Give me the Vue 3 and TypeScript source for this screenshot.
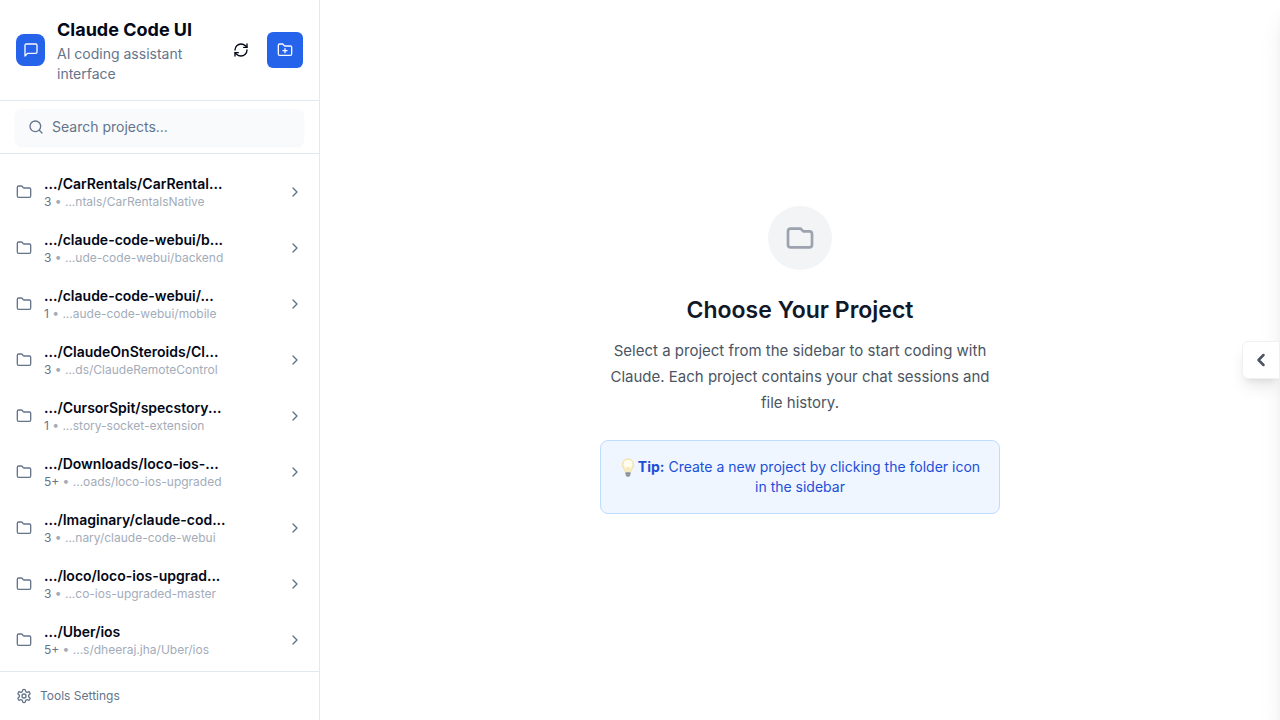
<script setup lang="ts">
import { ref, computed } from 'vue'

interface Project {
  name: string
  sessions: string
  path: string
}

const projects: Project[] = [
  { name: '.../CarRentals/CarRental...', sessions: '3', path: '...ntals/CarRentalsNative' },
  { name: '.../claude-code-webui/b...', sessions: '3', path: '...ude-code-webui/backend' },
  { name: '.../claude-code-webui/...', sessions: '1', path: '...aude-code-webui/mobile' },
  { name: '.../ClaudeOnSteroids/Cl...', sessions: '3', path: '...ds/ClaudeRemoteControl' },
  { name: '.../CursorSpit/specstory...', sessions: '1', path: '...story-socket-extension' },
  { name: '.../Downloads/loco-ios-...', sessions: '5+', path: '...oads/loco-ios-upgraded' },
  { name: '.../Imaginary/claude-cod...', sessions: '3', path: '...nary/claude-code-webui' },
  { name: '.../loco/loco-ios-upgrad...', sessions: '3', path: '...co-ios-upgraded-master' },
  { name: '.../Uber/ios', sessions: '5+', path: '...s/dheeraj.jha/Uber/ios' },
]

const query = ref('')
const visible = computed(() =>
  projects.filter((p) => (p.name + p.path).toLowerCase().includes(query.value.toLowerCase())),
)
</script>

<template>
  <div class="page">
    <aside class="sidebar">
      <header class="head">
        <div class="brand">
          <div class="logo">
            <svg class="icon" viewBox="0 0 24 24"><path d="M21 15a2 2 0 0 1-2 2H7l-4 4V5a2 2 0 0 1 2-2h14a2 2 0 0 1 2 2z" /></svg>
          </div>
          <div class="brand-text">
            <h1>Claude Code UI</h1>
            <p>AI coding assistant interface</p>
          </div>
        </div>
        <div class="actions">
          <button class="square" type="button" aria-label="Refresh projects">
            <svg class="icon" viewBox="0 0 24 24">
              <path d="M3 12a9 9 0 0 1 9-9 9.75 9.75 0 0 1 6.74 2.74L21 8" />
              <path d="M21 3v5h-5" />
              <path d="M21 12a9 9 0 0 1-9 9 9.75 9.75 0 0 1-6.74-2.74L3 16" />
              <path d="M8 16H3v5" />
            </svg>
          </button>
          <button class="square primary" type="button" aria-label="Create project">
            <svg class="icon" viewBox="0 0 24 24">
              <path d="M12 10v6M9 13h6" />
              <path d="M20 20a2 2 0 0 0 2-2V8a2 2 0 0 0-2-2h-7.900a2 2 0 0 1-1.690-.9L9.600 3.900A2 2 0 0 0 7.930 3H4a2 2 0 0 0-2 2v13a2 2 0 0 0 2 2Z" />
            </svg>
          </button>
        </div>
      </header>

      <div class="search">
        <label class="search-box">
          <svg class="icon" viewBox="0 0 24 24"><circle cx="11" cy="11" r="8" /><path d="m21 21-4.300-4.300" /></svg>
          <input v-model="query" type="text" placeholder="Search projects..." aria-label="Search projects" />
        </label>
      </div>

      <nav class="list" aria-label="Projects">
        <button v-for="p in visible" :key="p.name" class="project" type="button">
          <svg class="icon" viewBox="0 0 24 24">
            <path d="M20 20a2 2 0 0 0 2-2V8a2 2 0 0 0-2-2h-7.900a2 2 0 0 1-1.690-.9L9.600 3.900A2 2 0 0 0 7.930 3H4a2 2 0 0 0-2 2v13a2 2 0 0 0 2 2Z" />
          </svg>
          <span class="info">
            <span class="name">{{ p.name }}</span>
            <span class="meta">{{ p.sessions }}<span class="path"> • {{ p.path }}</span></span>
          </span>
          <svg class="icon" viewBox="0 0 24 24"><path d="m9 18 6-6-6-6" /></svg>
        </button>
      </nav>

      <footer class="foot">
        <button class="settings" type="button">
          <svg class="icon" viewBox="0 0 24 24">
            <path d="M12.220 2h-.44a2 2 0 0 0-2 2v.18a2 2 0 0 1-1 1.730l-.43.25a2 2 0 0 1-2 0l-.15-.08a2 2 0 0 0-2.730.73l-.22.38a2 2 0 0 0 .73 2.730l.15.1a2 2 0 0 1 1 1.720v.51a2 2 0 0 1-1 1.740l-.15.09a2 2 0 0 0-.73 2.730l.22.38a2 2 0 0 0 2.730.73l.15-.08a2 2 0 0 1 2 0l.43.25a2 2 0 0 1 1 1.730V20a2 2 0 0 0 2 2h.44a2 2 0 0 0 2-2v-.18a2 2 0 0 1 1-1.730l.43-.25a2 2 0 0 1 2 0l.15.08a2 2 0 0 0 2.730-.73l.22-.39a2 2 0 0 0-.73-2.730l-.15-.08a2 2 0 0 1-1-1.740v-.5a2 2 0 0 1 1-1.740l.15-.09a2 2 0 0 0 .73-2.730l-.22-.38a2 2 0 0 0-2.730-.73l-.15.08a2 2 0 0 1-2 0l-.43-.25a2 2 0 0 1-1-1.730V4a2 2 0 0 0-2-2z" />
            <circle cx="12" cy="12" r="3" />
          </svg>
          Tools Settings
        </button>
      </footer>
    </aside>

    <main class="main">
      <section class="empty">
        <div class="circle">
          <svg class="icon" viewBox="0 0 24 24">
            <path d="M3 7v10a2 2 0 0 0 2 2h14a2 2 0 0 0 2-2V9a2 2 0 0 0-2-2h-4.500l-2-2H5a2 2 0 0 0-2 2z" />
          </svg>
        </div>
        <h2>Choose Your Project</h2>
        <p class="lead">Select a project from the sidebar to start coding with Claude. Each project contains your chat sessions and file history.</p>
        <p class="tip">
          <svg class="bulb" viewBox="0 0 16 20" aria-hidden="true">
            <path d="M8 1C4.500 1 2.500 3.500 2.500 6.500c0 3.500 2.500 4.500 3 8h5c.5-3.500 3-4.500 3-8C13.500 3.500 11.500 1 8 1z" fill="#fdf3cb" stroke="#f1dda0" />
            <ellipse cx="8" cy="6" rx="4" ry="4" fill="#fffdf0" />
            <path d="M6.500 9 8 10l1.500-1M7 10v4M9 10v4" fill="none" stroke="#eadba9" stroke-width=".7" />
            <path d="M5.500 14h5v3l-1.500 2H7l-1.500-2z" fill="#a6a9ad" />
            <path d="M5.500 15.500h5M6 17.200h4" stroke="#74787e" stroke-width=".6" />
          </svg><strong>Tip:</strong> Create a new project by clicking the folder icon in the sidebar
        </p>
      </section>
    </main>

    <button class="drawer-handle" type="button" aria-label="Open quick settings">
      <svg class="icon" viewBox="0 0 24 24"><path d="m15 18-6-6 6-6" /></svg>
    </button>
    <div class="drawer"></div>
  </div>
</template>

<style>
body {
  margin: 0;
}
</style>

<style scoped>
.page {
  position: relative;
  display: flex;
  height: 100vh;
  overflow: hidden;
  background: #fff;
  color: #020817;
  font-family: Inter, "Liberation Sans", sans-serif;
  font-size: 14px;
  line-height: 20px;
}
.page *,
.page {
  box-sizing: border-box;
}
h1,
h2,
p {
  margin: 0;
}
button {
  border: 0;
  margin: 0;
  padding: 0;
  background: none;
  color: inherit;
  font: inherit;
  cursor: pointer;
}
.icon {
  flex: none;
  width: 16px;
  height: 16px;
  fill: none;
  stroke: currentColor;
  stroke-width: 2;
  stroke-linecap: round;
  stroke-linejoin: round;
}
.sidebar {
  flex: none;
  display: flex;
  flex-direction: column;
  width: 320px;
  border-right: 1px solid #e2e8f0;
}
.head {
  display: flex;
  align-items: center;
  justify-content: space-between;
  padding: 16px;
  border-bottom: 1px solid #e2e8f0;
}
.brand {
  display: flex;
  align-items: center;
  gap: 12px;
  min-width: 0;
}
.logo {
  flex: none;
  display: flex;
  align-items: center;
  justify-content: center;
  width: 29px;
  height: 32px;
  border-radius: 8px;
  background: #2563eb;
  color: #f8fafc;
}
.brand-text {
  max-width: 152px;
}
h1 {
  font-size: 18px;
  line-height: 28px;
  font-weight: 700;
}
.brand-text p {
  color: #64748b;
}
.actions {
  display: flex;
  flex: none;
  gap: 8px;
}
.square {
  display: flex;
  align-items: center;
  justify-content: center;
  width: 36px;
  height: 36px;
  border-radius: 6px;
}
.primary {
  background: #2563eb;
  color: #f8fafc;
}
.search {
  padding: 8px 16px;
  border-bottom: 1px solid #e2e8f0;
}
.search-box {
  display: flex;
  align-items: center;
  gap: 8px;
  height: 36px;
  padding: 0 12px;
  border-radius: 6px;
  background: #f9fafc;
  box-shadow: 0 1px 2px 1px #f6f8fa;
  color: #64748b;
}
.search-box input {
  flex: 1;
  min-width: 0;
  padding: 0;
  border: 0;
  outline: 0;
  background: none;
  color: #020817;
  font: inherit;
}
.search-box input::placeholder {
  color: #64748b;
  opacity: 1;
}
.list {
  flex: 1;
  min-height: 0;
  overflow: hidden;
  padding: 10px 0 0;
}
.project {
  display: flex;
  align-items: center;
  gap: 12px;
  width: 100%;
  height: 56px;
  padding: 0 16px;
  text-align: left;
  color: #64748b;
}
.info {
  flex: 1;
  min-width: 0;
}
.name,
.meta {
  display: block;
  white-space: nowrap;
}
.name {
  color: #020817;
  font-weight: 600;
}
.meta {
  font-size: 12px;
  line-height: 16px;
}
.path {
  opacity: 0.6;
}
.foot {
  padding: 8px;
  border-top: 1px solid #e2e8f0;
}
.settings {
  display: flex;
  align-items: center;
  gap: 8px;
  width: 100%;
  height: 32px;
  padding: 0 8px;
  color: #64748b;
  font-size: 12px;
}
.main {
  flex: 1;
  display: flex;
  align-items: center;
  justify-content: center;
  min-width: 0;
}
.empty {
  display: flex;
  flex-direction: column;
  align-items: center;
  width: 100%;
  max-width: 400px;
  text-align: center;
}
.circle {
  display: flex;
  align-items: center;
  justify-content: center;
  width: 64px;
  height: 64px;
  margin-bottom: 24px;
  border-radius: 50%;
  background: #f3f4f6;
  color: #9ca3af;
}
.circle .icon {
  width: 32px;
  height: 32px;
}
h2 {
  margin-bottom: 12px;
  color: #111827;
  font-size: 23px;
  line-height: 32px;
  font-weight: 600;
}
.lead {
  margin-bottom: 24px;
  color: #4b5563;
  font-size: 15px;
  line-height: 26px;
}
.tip {
  width: 100%;
  padding: 16px;
  border: 1px solid #bfdbfe;
  border-radius: 8px;
  background: #eff6ff;
  color: #1d4ed8;
}
.bulb {
  width: 16px;
  height: 20px;
  margin: -4px 2px -4px 0;
  vertical-align: middle;
}
.drawer-handle {
  position: absolute;
  right: 0;
  top: 50%;
  z-index: 2;
  display: flex;
  align-items: center;
  justify-content: center;
  width: 38px;
  height: 38px;
  margin-top: -19px;
  border: 1px solid #f0f1f3;
  border-radius: 6px 0 0 6px;
  background: #fff;
  color: #4b5563;
  box-shadow: 0 10px 15px -3px rgba(0, 0, 0, 0.1), 0 4px 6px -4px rgba(0, 0, 0, 0.1);
}
.drawer-handle .icon {
  width: 20px;
  height: 20px;
  stroke-width: 3;
}
.drawer {
  position: absolute;
  left: 100%;
  top: 0;
  bottom: 0;
  width: 256px;
  box-shadow: 0 20px 25px -5px rgba(0, 0, 0, 0.1), 0 8px 10px -6px rgba(0, 0, 0, 0.1);
}
</style>
